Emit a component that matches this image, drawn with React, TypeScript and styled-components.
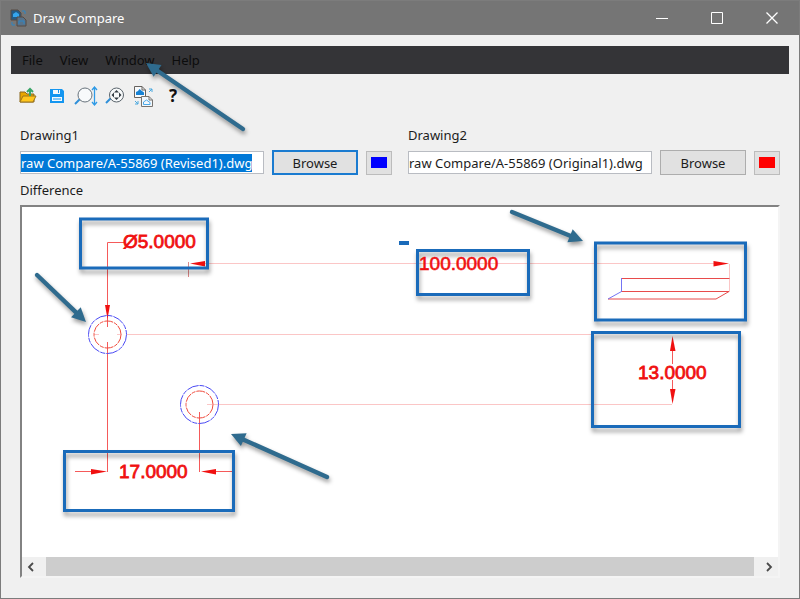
import React, { useEffect, useRef } from "react";
import styled, { createGlobalStyle } from "styled-components";

const GlobalStyle = createGlobalStyle`
  * { box-sizing: border-box; }
  body { margin: 0; background: #f0f0f0; }
  button, input { font: inherit; color: inherit; }
`;

const Window = styled.div`
  position: relative;
  display: flex;
  flex-direction: column;
  min-height: 100vh;
  border: 1px solid #7c7c7c;
  background: #f0f0f0;
  color: #1c1c1c;
  font: 13px/20px "Segoe UI", "Noto Sans", sans-serif;
`;

const TitleBar = styled.header`
  display: flex;
  align-items: center;
  height: 34px;
  padding-left: 9px;
  background: #757575;
  color: #fff;
`;

const Title = styled.h1`
  flex: 1;
  margin: 0 0 0 5px;
  font-size: 13px;
  font-weight: 400;
`;

const CaptionButton = styled.button`
  display: grid;
  place-items: center;
  width: 55px;
  height: 34px;
  padding: 0;
  border: 0;
  background: transparent;
  color: #fff;
`;

const Content = styled.main`
  display: flex;
  flex: 1;
  flex-direction: column;
  padding: 11px 10px 20px;
`;

const MenuBar = styled.nav`
  display: flex;
  gap: 17px;
  height: 28px;
  padding: 0 11px;
  background: #343437;
`;

const MenuItem = styled.button`
  padding: 0;
  border: 0;
  background: transparent;
  color: #0c0c0c;
`;

const Toolbar = styled.div`
  display: flex;
  align-items: center;
  gap: 5px;
  height: 44px;
  padding: 0 5px;
`;

const ToolButton = styled.button`
  display: grid;
  place-items: center;
  width: 24px;
  height: 26px;
  padding: 0;
  border: 0;
  background: transparent;
  svg { display: block; }
`;

const Help = styled.span`
  color: #111;
  font: 700 17px/20px "Noto Sans", sans-serif;
`;

const Sources = styled.div`
  display: grid;
  grid-template-columns: 1fr 1fr;
  gap: 16px;
  margin: 7px 9px 5px;
`;

const Source = styled.div`
  display: flex;
  flex-direction: column;
  gap: 5px;
`;

const SourceRow = styled.div`
  display: flex;
  align-items: center;
  gap: 8px;
  height: 25px;
`;

const PathInput = styled.input`
  flex: 1;
  min-width: 0;
  height: 23px;
  padding: 0;
  border: 1px solid #b9bcc2;
  outline: 0;
  background: #fff;
  line-height: 19px;
  caret-color: transparent;
  &::selection { background: #0078d7; color: #fff; }
`;

const Browse = styled.button<{ $primary?: boolean }>`
  width: 86px;
  height: 25px;
  padding: 0;
  border: ${(p) => (p.$primary ? "2px solid #1a7bd0" : "1px solid #adadad")};
  background: #e1e1e1;
  line-height: 20px;
`;

const ColorButton = styled.button<{ $color: string }>`
  width: 26px;
  height: 24px;
  padding: 5px 4px 6px;
  border: 1px solid #bcbcbc;
  background: linear-gradient(${(p) => p.$color}, ${(p) => p.$color}) content-box, #e1e1e1;
`;

const SectionLabel = styled.h2`
  margin: 0 9px 5px;
  font-size: 13px;
  font-weight: 400;
`;

const Viewer = styled.section`
  display: flex;
  flex: 1;
  flex-direction: column;
  margin: 0 9px;
  border: 2px solid #828282;
  border-right-color: #f4f4f4;
  border-bottom-color: #f4f4f4;
  background: #fff;
`;

const Sheet = styled.div`
  flex: 1;
  svg { display: block; width: 100%; }
`;

const ScrollBar = styled.div`
  display: flex;
  height: 19px;
  background: #f0f0f0;
`;

const ScrollButton = styled.button`
  display: flex;
  align-items: center;
  justify-content: flex-start;
  width: 24px;
  padding: 0 5px;
  border: 0;
  background: transparent;
  color: #4a4a4a;
  &:last-child { justify-content: flex-end; }
`;

const ScrollThumb = styled.div`
  flex: 1;
  background: #cdcdcd;
`;

const MenuPointer = styled.svg`
  position: absolute;
  top: 54px;
  left: 139px;
  pointer-events: none;
`;

const CalloutBox = styled.rect`
  fill: none;
  stroke: #1a6bba;
  stroke-width: 3px;
  filter: drop-shadow(1px 4px 2px rgba(0, 0, 0, 0.38));
`;

const ArrowShape = styled.g`
  fill: #2f6b8e;
  stroke: #2f6b8e;
  filter: drop-shadow(1px 3px 2px rgba(0, 0, 0, 0.4));
`;

const Dimension = styled.text<{ $light?: boolean }>`
  fill: #f01010;
  stroke: #f01010;
  stroke-width: ${(p) => (p.$light ? "0.6px" : "0.8px")};
  font: 19px "Liberation Sans", Arial, sans-serif;
`;

type ArrowProps = { x1: number; y1: number; x2: number; y2: number };

function Arrow({ x1, y1, x2, y2 }: ArrowProps) {
  const len = Math.hypot(x2 - x1, y2 - y1);
  const angle = (Math.atan2(y2 - y1, x2 - x1) * 180) / Math.PI;
  return (
    <ArrowShape>
      <g transform={`translate(${x1} ${y1}) rotate(${angle})`}>
        <path d={`M0 0H${len - 12}`} strokeWidth="4.4" strokeLinecap="round" />
        <path d={`M${len} 0L${len - 14} -7V7Z`} stroke="none" />
      </g>
    </ArrowShape>
  );
}

function AppIcon() {
  return (
    <svg width="18" height="18" viewBox="0 0 18 18" fill="none">
      <path d="M1 1H8L11 4V11H1Z" fill="#245b86" stroke="#574a42" />
      <path d="M3 8V5L6 3L9 5V8Z" fill="#35a5ed" />
      <path d="M7 8H13L16 11V17H7Z" fill="#58738a" stroke="#574a42" />
      <path d="M9 15V12H14V15M12 2H15V5M2 13V16H5" stroke="#2d86c4" />
    </svg>
  );
}

function OpenIcon() {
  return (
    <svg width="18" height="18" viewBox="0 0 18 18">
      <path d="M1 15V5H6L8 7H15V15Z" fill="#e9a600" stroke="#8a6820" />
      <path d="M1 15L4 9H17L14 15Z" fill="#ffc61c" stroke="#9b741d" />
      <path d="M11 9V3M8 5L11 2L14 5" fill="none" stroke="#38a567" strokeWidth="2" />
    </svg>
  );
}

function SaveIcon() {
  return (
    <svg width="16" height="16" viewBox="0 0 16 16">
      <path d="M1 1H13L15 3V15H1Z" fill="#1496f0" />
      <path d="M4 2H11V6H4ZM3 9H13V13H3Z" fill="#f5f9fc" />
      <path d="M9.5 2V5M4 11H12" stroke="#1496f0" />
    </svg>
  );
}

function ZoomRangeIcon() {
  return (
    <svg width="24" height="20" viewBox="0 0 24 20" fill="none">
      <path d="M1 18L6 13" stroke="#2e8fd9" strokeWidth="2" />
      <circle cx="11" cy="9" r="7" fill="#f8fafb" stroke="#68737c" />
      <path d="M20.5 2V18M18 4L20.5 1L23 4M18 16L20.5 19L23 16" stroke="#2e9ae6" strokeWidth="1.3" />
    </svg>
  );
}

function ZoomExtentsIcon() {
  return (
    <svg width="20" height="20" viewBox="0 0 20 20" fill="none">
      <path d="M1 17L6 12" stroke="#2e8fd9" strokeWidth="2" />
      <circle cx="11.5" cy="9" r="7" fill="#f8fafb" stroke="#59636b" />
      <path
        d="M11.5 4L14 6.5H9ZM11.5 14L9 11.5H14ZM6.5 9L9 6.5V11.5ZM16.5 9L14 6.5V11.5Z"
        fill="#343d44"
      />
    </svg>
  );
}

function CompareIcon() {
  return (
    <svg width="22" height="22" viewBox="0 0 22 22" fill="none">
      <path d="M1.5 1.5H9L12.5 5V12.5H1.5Z" fill="#f7f9fb" stroke="#66625f" />
      <path d="M9 1.5V5H12.5" stroke="#66625f" />
      <path d="M3 10V7L5 6L6.5 4L9 6L11 7.5V10Z" fill="#1782d4" />
      <path d="M8.5 11.5H16L19.5 15V21.5H8.5Z" fill="#f2f7fb" stroke="#77736f" />
      <path d="M16 11.5V15H19.5" stroke="#77736f" />
      <path d="M10.5 19.5V17L13.5 15L17 17.500V19.5Z" stroke="#4ba9e9" />
      <path d="M16 4H19V7M16 7L19 4M2 16L5 19M5 16V19H2" stroke="#4aa8df" />
    </svg>
  );
}

function ConcentricHole({ cx, cy }: { cx: number; cy: number }) {
  return (
    <g fill="none">
      <circle cx={cx} cy={cy} r="19" stroke="#4a4af4" strokeDasharray="12 1 5 1" />
      <circle cx={cx} cy={cy} r="13.5" stroke="#f04a3c" strokeDasharray="9 1 4 1" />
    </g>
  );
}

function DifferenceDrawing() {
  return (
    <svg viewBox="22 207 756 350" preserveAspectRatio="xMinYMin meet" role="img" aria-label="Drawing difference">
      <g fill="none" stroke="#fbc6c6">
        <path d="M127 334.5H592M207 404.5H672M205 263.5H714" />
        <path d="M729.5 264V292M117 334.5H122M94 334.5H99" />
        <path d="M188.5 262V277" stroke="#d88" />
      </g>
      <g fill="none" stroke="#f55a5a">
        <path d="M124 242.5H107.5V327M107.5 342V472" />
        <path d="M199.5 412V472M75 471.5H92M216 471.5H232" />
        <path d="M672.5 350V364M672.5 380V390" />
      </g>
      <g fill="#f01010">
        <path d="M107.5 319L105 305H110Z" />
        <path d="M190 263.5L205 261V266.5Z" />
        <path d="M729 263.5L713.5 261V266.5Z" />
        <path d="M107 471.5L91 469V474.5Z" />
        <path d="M201 471.5L216 469V474.5Z" />
        <path d="M672.5 336L670 351H675.5Z" />
        <path d="M672.5 404L670 389H675.5Z" />
      </g>
      <ConcentricHole cx={107.5} cy={334.5} />
      <ConcentricHole cx={199.5} cy={404.5} />
      <path d="M621 278.5H729.5M621 291.5H729M608 299H716L729 291.5" fill="none" stroke="#e84b4b" />
      <path d="M621.5 278V291.5L608 299" fill="none" stroke="#7474f4" />

      <CalloutBox x="80.5" y="219" width="127" height="49" />
      <CalloutBox x="417.5" y="250.5" width="111" height="44" />
      <CalloutBox x="595.5" y="243" width="150" height="77" />
      <CalloutBox x="592.5" y="332.5" width="147" height="94" />
      <CalloutBox x="64.5" y="451.5" width="169" height="59" />
      <rect x="399" y="241" width="10" height="4" fill="#1a6bba" />

      <Dimension x="123" y="248">Ø5.0000</Dimension>
      <Dimension x="419" y="270" $light>100.0000</Dimension>
      <Dimension x="638" y="379">13.0000</Dimension>
      <Dimension x="119" y="478">17.0000</Dimension>

      <Arrow x1={37} y1={275} x2={86} y2={322} />
      <Arrow x1={327} y1={477} x2={231} y2={434} />
      <Arrow x1={512} y1={212} x2={583} y2={241} />
    </svg>
  );
}

export default function App() {
  const firstPath = useRef<HTMLInputElement>(null);

  useEffect(() => {
    firstPath.current?.focus();
    firstPath.current?.select();
  }, []);

  return (
    <>
      <GlobalStyle />
      <Window>
        <TitleBar>
          <AppIcon />
          <Title>Draw Compare</Title>
          <CaptionButton aria-label="Minimize">
            <svg width="12" height="12" stroke="currentColor"><path d="M0 6.5H12" /></svg>
          </CaptionButton>
          <CaptionButton aria-label="Maximize">
            <svg width="12" height="12" stroke="currentColor" fill="none"><path d="M.5 .5H11.5V11.5H.5Z" /></svg>
          </CaptionButton>
          <CaptionButton aria-label="Close">
            <svg width="12" height="12" stroke="currentColor" strokeWidth="1.3"><path d="M.5 .5L11.5 11.5M11.5 .5L.5 11.5" /></svg>
          </CaptionButton>
        </TitleBar>
        <Content>
          <MenuBar>
            {["File", "View", "Window", "Help"].map((name) => (
              <MenuItem key={name}>{name}</MenuItem>
            ))}
          </MenuBar>
          <Toolbar>
            <ToolButton aria-label="Open"><OpenIcon /></ToolButton>
            <ToolButton aria-label="Save"><SaveIcon /></ToolButton>
            <ToolButton aria-label="Zoom"><ZoomRangeIcon /></ToolButton>
            <ToolButton aria-label="Zoom extents"><ZoomExtentsIcon /></ToolButton>
            <ToolButton aria-label="Compare"><CompareIcon /></ToolButton>
            <ToolButton aria-label="Help"><Help>?</Help></ToolButton>
          </Toolbar>
          <Sources>
            <Source>
              <label htmlFor="drawing1">Drawing1</label>
              <SourceRow>
                <PathInput id="drawing1" ref={firstPath} defaultValue="raw Compare/A-55869 (Revised1).dwg" />
                <Browse $primary>Browse</Browse>
                <ColorButton $color="#0000ff" aria-label="Drawing1 color" />
              </SourceRow>
            </Source>
            <Source>
              <label htmlFor="drawing2">Drawing2</label>
              <SourceRow>
                <PathInput id="drawing2" defaultValue="raw Compare/A-55869 (Original1).dwg" />
                <Browse>Browse</Browse>
                <ColorButton $color="#ff0000" aria-label="Drawing2 color" />
              </SourceRow>
            </Source>
          </Sources>
          <SectionLabel>Difference</SectionLabel>
          <Viewer>
            <Sheet><DifferenceDrawing /></Sheet>
            <ScrollBar>
              <ScrollButton aria-label="Scroll left">
                <svg width="8" height="10" fill="none" stroke="currentColor" strokeWidth="1.8"><path d="M6 1L2 5L6 9" /></svg>
              </ScrollButton>
              <ScrollThumb />
              <ScrollButton aria-label="Scroll right">
                <svg width="8" height="10" fill="none" stroke="currentColor" strokeWidth="1.8"><path d="M2 1L6 5L2 9" /></svg>
              </ScrollButton>
            </ScrollBar>
          </Viewer>
        </Content>
        <MenuPointer width="116" height="90" viewBox="140 55 116 90" aria-hidden="true">
          <Arrow x1={243} y1={129} x2={146} y2={63} />
        </MenuPointer>
      </Window>
    </>
  );
}
